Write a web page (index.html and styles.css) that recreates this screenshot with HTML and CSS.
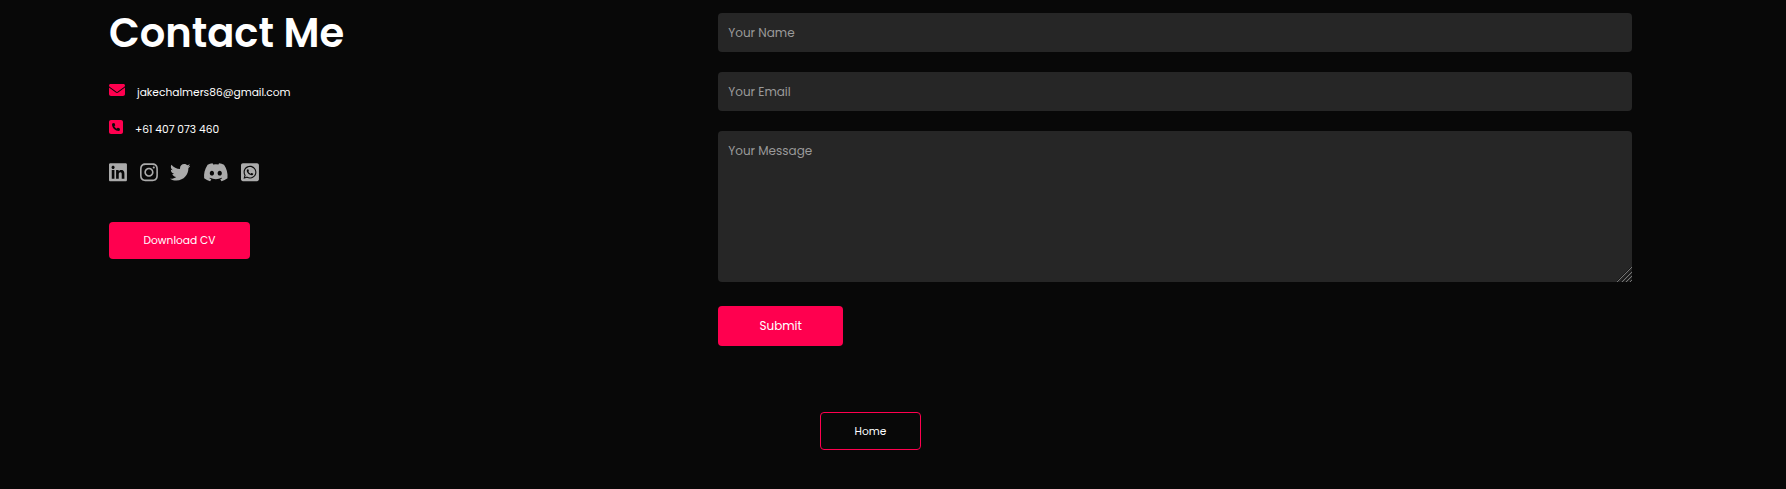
FILE: index.html
```html
<!DOCTYPE html>
<html lang="en">
<head>
<meta charset="utf-8">
<title>Contact Me</title>
<link rel="stylesheet" href="styles.css">
</head>
<body>
<section class="contact">
  <div class="row">
    <div class="contact-left">
      <h1 class="title">Contact Me</h1>
      <p class="line line-mail"><svg class="icon-mail" viewBox="0 0 512 512"><path d="M48 64C21.5 64 0 85.5 0 112c0 15.1 7.1 29.3 19.2 38.4L236.8 313.6c11.4 8.5 27 8.5 38.4 0L492.8 150.4c12.1-9.1 19.2-23.3 19.2-38.4c0-26.5-21.5-48-48-48H48zM0 176V384c0 35.3 28.7 64 64 64H448c35.3 0 64-28.7 64-64V176L294.4 339.2c-22.8 17.1-54 17.1-76.8 0L0 176z"/></svg><span class="mail">jakechalmers86@gmail.com</span></p>
      <p class="line line-phone"><svg class="icon-phone" viewBox="0 0 448 512"><path d="M64 32C28.7 32 0 60.7 0 96V416c0 35.3 28.7 64 64 64H384c35.3 0 64-28.7 64-64V96c0-35.3-28.7-64-64-64H64zm90.7 96.7c9.7-2.6 19.9 2.3 23.7 11.6l20 48c3.4 8.2 1 17.6-5.8 23.2L168 231.7c16.6 35.2 45.1 63.7 80.3 80.3l20.2-24.7c5.6-6.8 15-9.2 23.2-5.8l48 20c9.3 3.9 14.2 14 11.6 23.7l-12 44C336.9 378 329 384 320 384C196.3 384 96 283.7 96 160c0-9 6.1-16.9 14.7-19.3l44-12z"/></svg><span class="phone">+61 407 073 460</span></p>
      <div class="social">
        <a href="#" aria-label="LinkedIn"><svg viewBox="0 0 448 512"><path d="M416 32H31.9C14.3 32 0 46.5 0 64.3v383.4C0 465.5 14.3 480 31.9 480H416c17.6 0 32-14.5 32-32.3V64.3c0-17.8-14.4-32.3-32-32.3zM135.4 416H69V202.2h66.5V416zm-33.2-243c-21.3 0-38.5-17.3-38.5-38.5S80.9 96 102.2 96c21.2 0 38.5 17.3 38.5 38.5 0 21.3-17.2 38.5-38.5 38.5zm282.1 243h-66.4V312c0-24.8-.5-56.7-34.5-56.7-34.6 0-39.9 27-39.9 54.9V416h-66.4V202.2h63.7v29.2h.9c8.9-16.8 30.6-34.5 62.9-34.5 67.2 0 79.7 44.3 79.7 101.9V416z"/></svg></a>
        <a href="#" aria-label="Instagram"><svg viewBox="0 0 448 512"><path d="M224.1 141c-63.6 0-114.9 51.3-114.9 114.9s51.3 114.9 114.9 114.9S339 319.5 339 255.9 287.7 141 224.1 141zm0 189.6c-41.1 0-74.7-33.5-74.7-74.7s33.5-74.7 74.7-74.7 74.7 33.5 74.7 74.7-33.6 74.7-74.7 74.7zm146.4-194.3c0 14.9-12 26.8-26.8 26.8-14.9 0-26.8-12-26.8-26.8s12-26.8 26.8-26.8 26.8 12 26.8 26.8zm76.1 27.2c-1.7-35.9-9.9-67.7-36.2-93.9-26.2-26.2-58-34.4-93.9-36.2-37-2.1-147.9-2.1-184.9 0-35.8 1.7-67.6 9.9-93.9 36.1s-34.4 58-36.2 93.9c-2.1 37-2.1 147.9 0 184.9 1.7 35.9 9.9 67.7 36.2 93.9s58 34.4 93.9 36.2c37 2.1 147.9 2.1 184.9 0 35.9-1.7 67.7-9.9 93.9-36.2 26.2-26.2 34.4-58 36.2-93.9 2.1-37 2.1-147.8 0-184.8zM398.8 388c-7.8 19.6-22.9 34.7-42.6 42.6-29.5 11.7-99.5 9-132.1 9s-102.7 2.6-132.1-9c-19.6-7.8-34.7-22.9-42.6-42.6-11.7-29.5-9-99.5-9-132.1s-2.6-102.7 9-132.1c7.8-19.6 22.9-34.7 42.6-42.6 29.5-11.7 99.5-9 132.1-9s102.7-2.6 132.1 9c19.6 7.8 34.7 22.9 42.6 42.6 11.7 29.5 9 99.5 9 132.1s2.7 102.7-9 132.1z"/></svg></a>
        <a href="#" aria-label="Twitter"><svg viewBox="0 0 512 512"><path d="M459.37 151.716c.325 4.548.325 9.097.325 13.645 0 138.72-105.583 298.558-298.558 298.558-59.452 0-114.68-17.219-161.137-47.106 8.447.974 16.568 1.299 25.34 1.299 49.055 0 94.213-16.568 130.274-44.832-46.132-.975-84.792-31.188-98.112-72.772 6.498.974 12.995 1.624 19.818 1.624 9.421 0 18.843-1.3 27.614-3.573-48.081-9.747-84.143-51.98-84.143-102.985v-1.299c13.969 7.797 30.214 12.67 47.431 13.319-28.264-18.843-46.781-51.005-46.781-87.391 0-19.492 5.197-37.36 14.294-52.954 51.655 63.675 129.3 105.258 216.365 109.807-1.624-7.797-2.599-15.918-2.599-24.04 0-57.828 46.782-104.934 104.934-104.934 30.213 0 57.502 12.67 76.67 33.137 23.715-4.548 46.456-13.32 66.599-25.34-7.798 24.366-24.366 44.833-46.132 57.827 21.117-2.273 41.584-8.122 60.426-16.243-14.292 20.791-32.161 39.308-52.628 54.253z"/></svg></a>
        <a href="#" aria-label="Discord"><svg viewBox="0 0 640 512"><path d="M524.531,69.836a1.5,1.5,0,0,0-.764-.7A485.065,485.065,0,0,0,404.081,32.03a1.816,1.816,0,0,0-1.923.91,337.461,337.461,0,0,0-14.9,30.6,447.848,447.848,0,0,0-134.426,0,309.541,309.541,0,0,0-15.135-30.6,1.89,1.89,0,0,0-1.924-.91A483.689,483.689,0,0,0,116.085,69.137a1.712,1.712,0,0,0-.788.676C39.068,183.651,18.186,294.69,28.43,404.354a2.016,2.016,0,0,0,.765,1.375A487.666,487.666,0,0,0,176.02,479.918a1.9,1.9,0,0,0,2.063-.676A348.2,348.2,0,0,0,208.12,430.4a1.86,1.86,0,0,0-1.019-2.588,321.173,321.173,0,0,1-45.868-21.853,1.885,1.885,0,0,1-.185-3.126c3.082-2.309,6.166-4.711,9.109-7.137a1.819,1.819,0,0,1,1.9-.256c96.229,43.917,200.41,43.917,295.5,0a1.812,1.812,0,0,1,1.924.233c2.944,2.426,6.027,4.851,9.132,7.16a1.884,1.884,0,0,1-.162,3.126,301.407,301.407,0,0,1-45.89,21.83,1.875,1.875,0,0,0-1,2.611,391.055,391.055,0,0,0,30.014,48.815,1.864,1.864,0,0,0,2.063.7A486.048,486.048,0,0,0,610.7,405.729a1.882,1.882,0,0,0,.765-1.352C623.729,277.594,590.933,167.465,524.531,69.836ZM222.491,337.58c-28.972,0-52.844-26.587-52.844-59.239S193.056,219.1,222.491,219.1c29.665,0,53.306,26.82,52.843,59.239C275.334,310.993,251.924,337.58,222.491,337.58Zm195.38,0c-28.971,0-52.843-26.587-52.843-59.239S388.437,219.1,417.871,219.1c29.667,0,53.307,26.82,52.844,59.239C470.715,310.993,447.538,337.58,417.871,337.58Z"/></svg></a>
        <a href="#" aria-label="WhatsApp"><svg viewBox="0 0 448 512"><path d="M224 122.8c-72.7 0-131.8 59.1-131.9 131.8 0 24.9 7 49.2 20.2 70.1l3.1 5-13.3 48.6 49.9-13.1 4.8 2.9c20.2 12 43.4 18.4 67.1 18.4h.1c72.6 0 133.3-59.1 133.3-131.8 0-35.2-15.2-68.3-40.1-93.2-25-25-58-38.7-93.2-38.7zm77.5 188.4c-3.3 9.3-19.1 17.7-26.7 18.8-12.6 1.9-22.4.9-47.5-9.9-39.7-17.2-65.7-57.2-67.7-59.8-2-2.6-16.2-21.5-16.2-41s10.2-29.1 13.9-33.1c3.6-4 7.9-5 10.6-5 2.6 0 5.3 0 7.6.1 2.4.1 5.7-.9 8.9 6.8 3.3 7.9 11.2 27.4 12.2 29.4s1.7 4.3.3 6.9c-7.6 15.2-15.7 14.6-11.6 21.6 15.3 26.3 30.6 35.4 53.9 47.1 4 2 6.3 1.7 8.6-1 2.3-2.6 9.9-11.6 12.5-15.5 2.6-4 5.3-3.3 8.9-2 3.6 1.3 23.1 10.9 27.1 12.9s6.6 3 7.6 4.6c.9 1.9.9 9.9-2.4 19.1zM400 32H48C21.5 32 0 53.5 0 80v352c0 26.5 21.5 48 48 48h352c26.5 0 48-21.5 48-48V80c0-26.5-21.5-48-48-48zM223.9 413.2c-26.6 0-52.7-6.7-75.8-19.3L64 416l22.5-82.2c-13.9-24-21.2-51.3-21.2-79.3C65.4 167.1 136.5 96 223.9 96c42.4 0 82.2 16.5 112.2 46.5 29.9 30 47.9 69.8 47.9 112.2 0 87.4-72.7 158.5-160.1 158.5z"/></svg></a>
      </div>
      <a class="btn btn-cv" href="#">Download CV</a>
    </div>
    <form class="contact-right">
      <input class="field" type="text" placeholder="Your Name">
      <input class="field" type="email" placeholder="Your Email">
      <div class="message-wrap">
        <textarea class="field message" placeholder="Your Message"></textarea>
        <svg class="grip" viewBox="0 0 15 15"><path class="grip-shade" d="M-1 15L15 -1M3 15L15 3M7 15L15 7M11 15L15 11"/><path class="grip-line" d="M0 15L15 0M5 15L15 5M9 15L15 9M13 15L15 13"/></svg>
      </div>
      <button class="btn btn-submit" type="button">Submit</button>
    </form>
  </div>
  <a class="btn btn-home" href="#">Home</a>
</section>
</body>
</html>
```

FILE: styles.css
```css
* {
  margin: 0;
  padding: 0;
  box-sizing: border-box;
  font-family: Poppins, Inter, "Open Sans", sans-serif;
}

body {
  background: #080808;
  color: #fff;
  overflow: hidden;
}

.contact {
  display: flex;
  flex-direction: column;
  align-items: center;
  width: 1523px;
  height: 489px;
  margin-left: 109px;
  padding-top: 13px;
}

.row {
  display: flex;
  width: 100%;
}

.contact-left {
  display: flex;
  flex-direction: column;
  align-items: flex-start;
  flex-basis: 40%;
}

.contact-right {
  display: flex;
  flex-direction: column;
  align-items: flex-start;
  flex-basis: 60%;
}

.title {
  height: 40px;
  font-size: 40px;
  font-weight: 600;
  line-height: 40px;
  white-space: nowrap;
}

.line {
  display: flex;
  align-items: flex-start;
  height: 20px;
  font-size: 10.67px;
  line-height: 20px;
  white-space: nowrap;
}

.line span {
  padding-top: 1px;
}

.line svg {
  height: 16px;
  fill: #ff004f;
}

.line-mail {
  margin-top: 29px;
}

.line-phone {
  margin-top: 17px;
}

.icon-mail {
  width: 16px;
  margin-right: 12px;
}

.icon-phone {
  width: 14px;
  margin-right: 12px;
}

.social {
  display: flex;
  gap: 12.4px;
  margin-top: 23px;
  padding-left: 0.3px;
}

.social svg {
  display: block;
  height: 20.5px;
  fill: #ababab;
}

.btn {
  display: flex;
  align-items: center;
  justify-content: center;
  border: 0;
  border-radius: 4px;
  background: #ff004f;
  color: #fff;
  text-decoration: none;
}

.btn-cv {
  width: 141px;
  height: 37px;
  margin-top: 39px;
  padding-top: 2px;
  font-size: 10.67px;
}

.field {
  width: 100%;
  height: 39px;
  margin-bottom: 20px;
  padding: 0 10px;
  border: 0;
  border-radius: 4px;
  outline: 0;
  background: #262626;
  color: #fff;
  font-size: 12px;
}

.field::placeholder {
  color: #9a9a9a;
}

.message-wrap {
  position: relative;
  width: 100%;
  height: 151px;
  margin-bottom: 24px;
}

.message {
  display: block;
  height: 151px;
  margin-bottom: 0;
  padding-top: 10px;
  line-height: 20px;
  resize: none;
}

.grip {
  position: absolute;
  right: 0;
  bottom: 0;
  width: 15px;
  height: 15px;
  fill: none;
  pointer-events: none;
}

.grip-shade {
  stroke: #151515;
  stroke-width: 1;
}

.grip-line {
  stroke: #8c8c8c;
  stroke-width: 0.8;
}

.btn-submit {
  width: 125px;
  height: 40px;
  font-size: 12px;
}

.btn-home {
  width: 101px;
  height: 38px;
  margin-top: 66px;
  padding-top: 2px;
  border: 1px solid #ff004f;
  background: transparent;
  font-size: 10.67px;
}
```
